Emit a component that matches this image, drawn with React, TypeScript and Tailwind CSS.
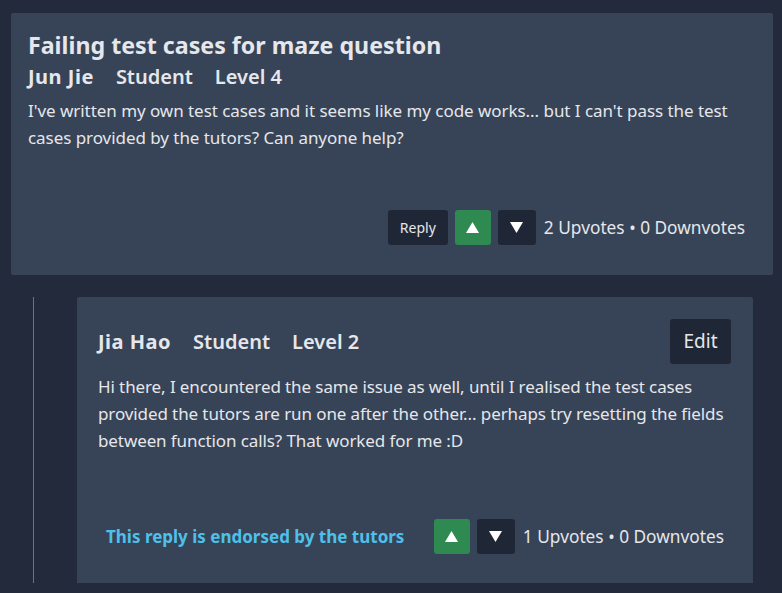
const font = { fontFamily: '"Noto Sans", "Open Sans", sans-serif' };

function Triangle({ down }: { down?: boolean }) {
  return (
    <svg width="13" height="11" viewBox="0 0 13 11" className="fill-white">
      {down ? <polygon points="0,0 13,0 6.5,11" /> : <polygon points="6.5,0 13,11 0,11" />}
    </svg>
  );
}

function VoteButtons({ up, down }: { up: number; down: number }) {
  return (
    <div className="flex items-center gap-[7px]">
      <button className="flex h-[35px] w-[36px] items-center justify-center rounded-[3px] bg-[#2f8a52]">
        <Triangle />
      </button>
      <button className="flex h-[35px] w-[38px] items-center justify-center rounded-[3px] bg-[#1f2737]">
        <Triangle down />
      </button>
      <span className="ml-[1px] text-[17.3px] text-[#e5e7eb]">
        {up} Upvotes • {down} Downvotes
      </span>
    </div>
  );
}

export default function App() {
  return (
    <div
      className="min-h-screen bg-[#222a3b] pl-[11px] pr-[9px] pt-[13px] text-[#e5e7eb]"
      style={font}
    >
      <div className="flex h-[262px] flex-col justify-between rounded-[2px] bg-[#374357] pb-[30px] pl-[17px] pr-[28px] pt-[16px]">
        <div>
          <h1 className="text-[23.2px] font-bold leading-[32px]">
            Failing test cases for maze question
          </h1>
          <div className="mt-[1px] flex gap-[22px] text-[20px] font-semibold leading-[30px]">
            <span className="font-bold tracking-[0.5px]">Jun Jie</span>
            <span>Student</span>
            <span>Level 4</span>
          </div>
          <p className="mt-[5px] text-[17px] leading-[27px] tracking-[-0.05px]">
            I've written my own test cases and it seems like my code works... but I can't pass the test
            cases provided by the tutors? Can anyone help?
          </p>
        </div>
        <div className="flex justify-end gap-[7px]">
          <button className="h-[35px] w-[60px] rounded-[3px] bg-[#1f2737] text-[14px]">
            Reply
          </button>
          <VoteButtons up={2} down={0} />
        </div>
      </div>

      <div className="mt-[22px] flex pr-[20px]">
        <div className="ml-[22px] w-[1px] bg-[#6b7280]" />
        <div className="ml-[43px] flex h-[286px] flex-1 flex-col justify-between rounded-t-[2px] bg-[#374357] pb-[29px] pl-[21px] pr-[22px] pt-[22px]">
          <div>
            <div className="flex items-center justify-between">
              <div className="flex gap-[22px] text-[20px] font-semibold">
                <span className="font-bold tracking-[0.5px]">Jia Hao</span>
                <span>Student</span>
                <span>Level 2</span>
              </div>
              <button className="h-[45px] w-[61px] rounded-[3px] bg-[#1f2737] text-[19px]">
                Edit
              </button>
            </div>
            <p className="mt-[9px] text-[17px] leading-[27px] tracking-[-0.1px]">
              Hi there, I encountered the same issue as well, until I realised the test cases provided
              the tutors are run one after the other... perhaps try resetting the fields between
              function calls? That worked for me :D
            </p>
          </div>
          <div className="flex items-center justify-between pl-[8px] pr-[7px]">
            <span className="text-[17px] font-bold text-[#4ec0ea]">
              This reply is endorsed by the tutors
            </span>
            <VoteButtons up={1} down={0} />
          </div>
        </div>
      </div>
    </div>
  );
}
